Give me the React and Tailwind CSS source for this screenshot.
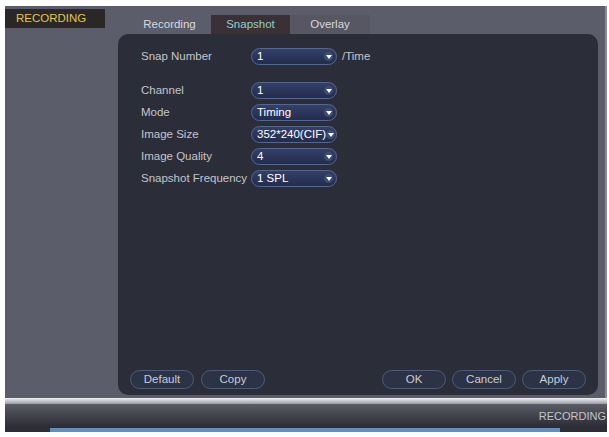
import React from 'react';

const font = { fontFamily: '"Liberation Sans", Arial, sans-serif' };

const Select = ({ value }) => (
  <div className="flex shrink-0 items-center justify-between w-[86px] h-[17px] rounded-full border border-[#55678f] bg-gradient-to-b from-[#34406a] to-[#232c4c] pl-[5px] pr-[3px] text-[11.5px] text-white">
    <span className="leading-none whitespace-nowrap">{value}</span>
    <span className="flex shrink-0 items-center justify-center w-[9px] h-[9px] rounded-full bg-[#3e4b75]">
      <svg width="6" height="4" viewBox="0 0 6 4">
        <path d="M0 0 L6 0 L3 4 Z" fill="#ffffff" />
      </svg>
    </span>
  </div>
);

const Label = ({ children }) => (
  <span className="w-[110px] shrink-0 whitespace-nowrap text-[11.5px] text-[#c3c5cd]">{children}</span>
);

const Row = ({ label, value }) => (
  <div className="flex items-center h-[17px]">
    <Label>{label}</Label>
    <Select value={value} />
  </div>
);

const Btn = ({ children }) => (
  <button className="w-[64px] h-[19px] rounded-full border border-[#4d5a78] bg-[#2c3346] text-[11.5px] leading-none text-[#c8ccd6]">
    {children}
  </button>
);

export default function App() {
  return (
    <div className="w-[609px] h-[437px] bg-white pt-[6px] pl-[5px] overflow-hidden" style={font}>
      {/* Main gray area */}
      <div className="flex w-[602px] h-[392px] bg-[#5b5d6b] border-r-[2px] border-[#8a8c96]">
        {/* Left column */}
        <div className="w-[113px] pt-[3px]">
          <div className="w-[100px] h-[19px] bg-[#2b2727] pl-[11px] flex items-center text-[11.5px] text-[#e0c454]">
            RECORDING
          </div>
        </div>

        {/* Right column */}
        <div className="flex flex-col">
          {/* Tabs */}
          <div className="flex h-[28px] items-end pl-[10px]">
            <div className="w-[83px] h-[19px] flex items-center justify-center text-[11.5px] text-[#d7d8de]">
              Recording
            </div>
            <div className="w-[79px] h-[19px] flex items-center justify-center bg-[#3b3036] text-[11.5px] text-[#8fcfcb]">
              Snapshot
            </div>
            <div className="w-[80px] h-[19px] flex items-center justify-center bg-[#575663] text-[11.5px] text-[#d7d8de]">
              Overlay
            </div>
          </div>

          {/* Panel */}
          <div className="flex flex-col justify-between w-[480px] h-[361px] rounded-[10px] bg-[#2b2e39] pt-[14px] pb-[6px]">
            <div className="pl-[23px]">
              <div className="flex items-center h-[17px]">
                <Label>Snap Number</Label>
                <Select value="1" />
                <span className="ml-[5px] text-[11.5px] text-[#c3c5cd]">/Time</span>
              </div>
              <div className="flex flex-col gap-[5px] mt-[17px]">
                <Row label="Channel" value="1" />
                <Row label="Mode" value="Timing" />
                <Row label="Image Size" value="352*240(CIF)" />
                <Row label="Image Quality" value="4" />
                <Row label="Snapshot Frequency" value="1 SPL" />
              </div>
            </div>

            <div className="flex items-center px-[12px]">
              <div className="flex gap-[7px]">
                <Btn>Default</Btn>
                <Btn>Copy</Btn>
              </div>
              <div className="flex gap-[6px] ml-auto">
                <Btn>OK</Btn>
                <Btn>Cancel</Btn>
                <Btn>Apply</Btn>
              </div>
            </div>
          </div>
        </div>
      </div>

      {/* Bottom status strip */}
      <div className="w-[602px] h-[6px] bg-gradient-to-b from-[#f2f2f4] to-[#9a9ca6]" />
      <div className="flex items-center justify-end w-[602px] h-[24px] bg-gradient-to-b from-[#5a5c66] to-[#2a2b33] pr-[1px]">
        <span className="text-[11px] text-[#c4c6cc]">RECORDING</span>
      </div>
      <div className="flex w-[602px] h-[4px]">
        <div className="w-[45px] bg-[#2c2d35]" />
        <div className="w-[510px] bg-[#5f8fbf]" />
        <div className="flex-1 bg-[#2c2d35]" />
      </div>
    </div>
  );
}
